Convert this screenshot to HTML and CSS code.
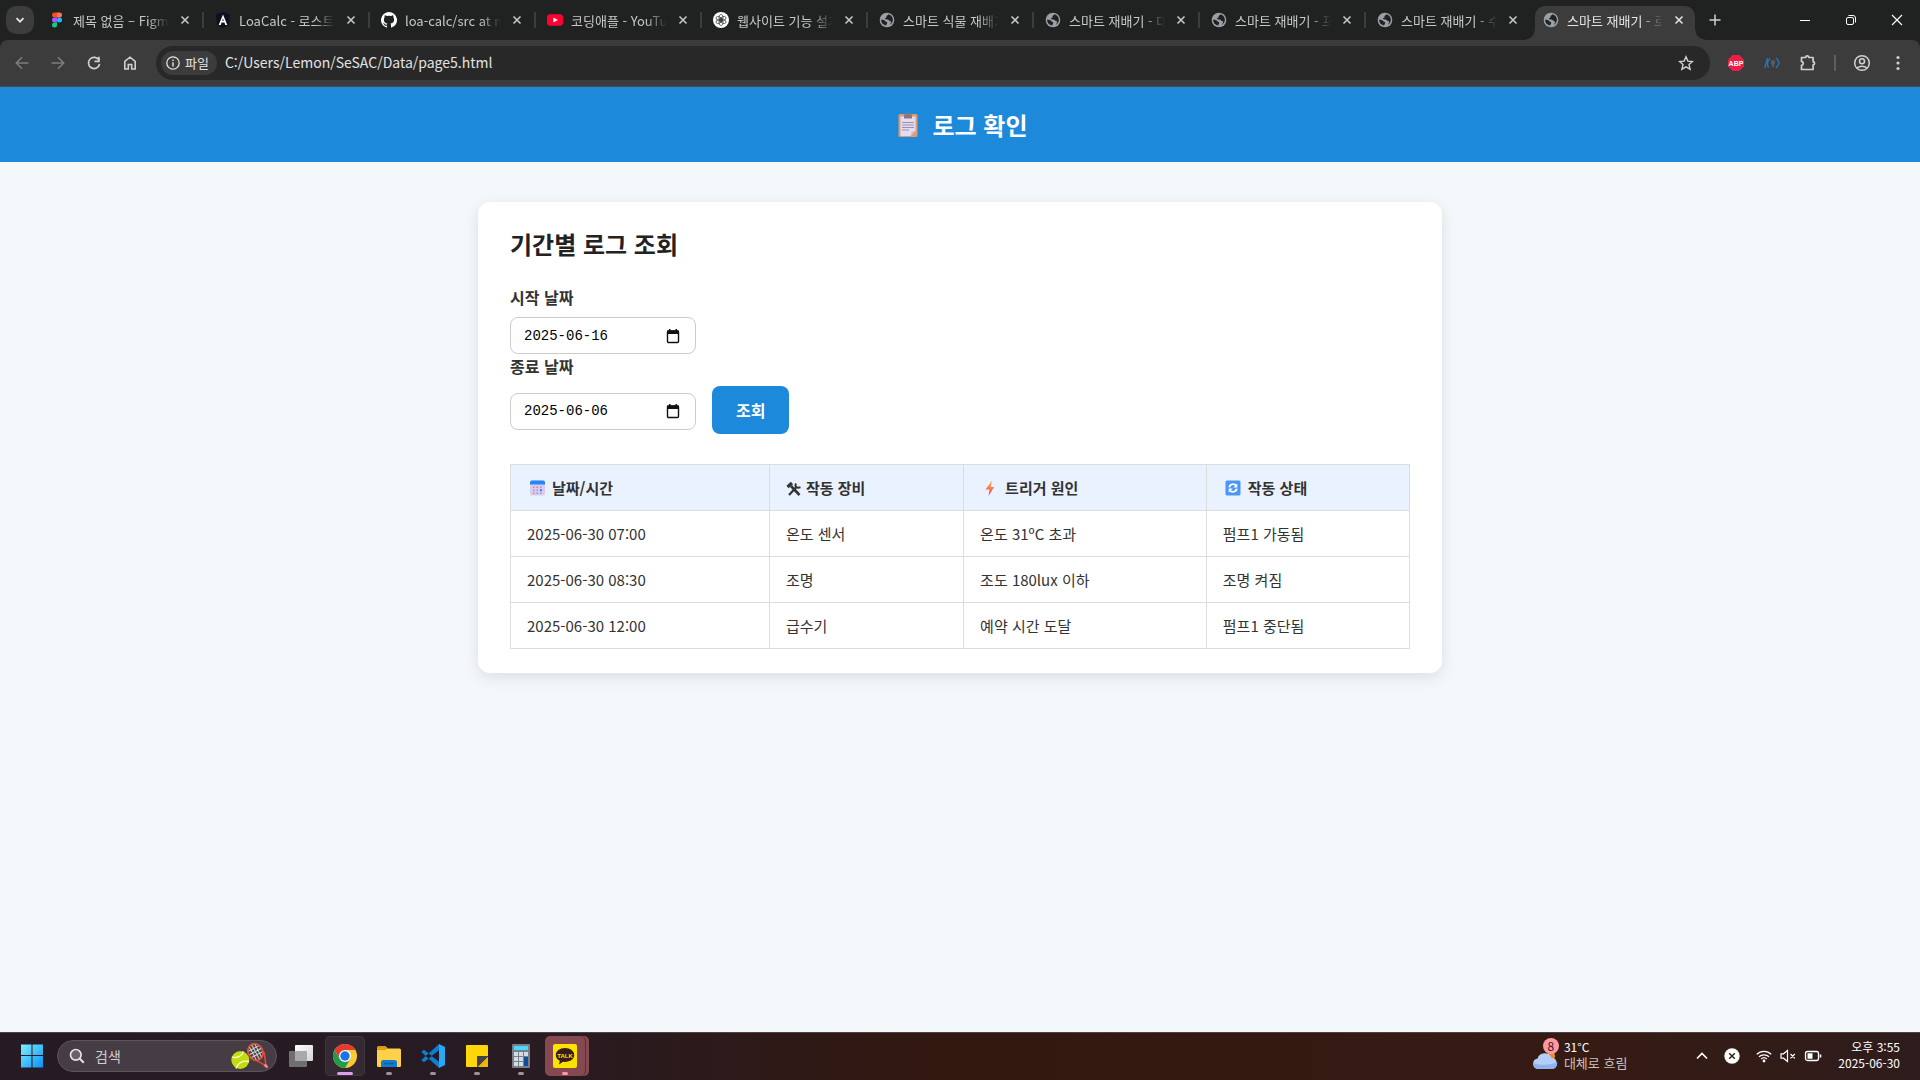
FILE: index.html
```html
<!DOCTYPE html>
<html lang="ko">
<head>
<meta charset="utf-8">
<meta name="viewport" content="width=device-width, initial-scale=1">
<title>스마트 재배기 - 로그 확인</title>
<link rel="stylesheet" href="styles.css">
</head>
<body>
<svg class="defs" aria-hidden="true">
  <symbol id="globe" viewBox="0 0 16 16">
    <circle cx="8" cy="8" r="7.3" fill="#9aa0a6"/>
    <path d="M2.2 7.6c1 .4 2.2.3 3 .6.9.4.9 1.3 1.900 1.500 1 .2 1.500.8 1 1.600-.5.700-.5 1.400-.9 2.300C4.300 13.200 2 11 2.200 7.600zM9.600 2.300c-.2 1-1.600.8-2 1.600-.4.700.3 1.300-.4 1.900-.5.500-1.200.3-1.300.9 0 .7 1.500.7 2.600.8 1.300.1 1.400 1.500 2.500 1.500 1 0 1.300.9 1 1.700-.3.800-1 1.400-1.300 2.200C13 11.500 14.200 9.500 13.800 7c-.4-2.400-2-4.100-4.200-4.700z" fill="#202221"/>
  </symbol>
  <symbol id="cross" viewBox="0 0 16 16"><path d="M4.500 4.500l7 7M11.500 4.500l-7 7" stroke="currentColor" stroke-width="1.600" fill="none"/></symbol>
</svg>

<header class="browser">
  <div class="tabstrip">
    <button class="tab-search" aria-label="탭 검색"><svg width="12" height="12" viewBox="0 0 12 12"><path d="M2.500 4.200L6 7.700l3.500-3.500" stroke="#e3e3e3" stroke-width="1.800" fill="none"/></svg></button>
    <div class="tabs">
      <div class="tab"><svg class="fav" viewBox="0 0 16 16"><path d="M8 .5H5.500a2.500 2.500 0 000 5H8z" fill="#f24e1e"/><path d="M8 .5h2.500a2.500 2.500 0 010 5H8z" fill="#ff7262"/><path d="M8 5.500H5.500a2.500 2.500 0 000 5H8z" fill="#a259ff"/><circle cx="10.500" cy="8" r="2.500" fill="#1abcfe"/><path d="M8 10.500H5.500A2.500 2.500 0 108 13z" fill="#0acf83"/></svg><span class="title">제목 없음 – Figma</span><button class="close" aria-label="닫기"><svg><use href="#cross"/></svg></button></div>
      <div class="tab"><svg class="fav" viewBox="0 0 16 16"><path d="M8 0l7 2.500-1 10L8 16l-6-3.500-1-10z" fill="#0c1020"/><path d="M3.700 13L8 2.500 12.300 13h-2L9.400 10.500H6.600L5.700 13zM7.200 8.800h1.600L8 6.600z" fill="#fff"/></svg><span class="title">LoaCalc - 로스트아</span><button class="close" aria-label="닫기"><svg><use href="#cross"/></svg></button></div>
      <div class="tab"><svg class="fav" viewBox="0 0 16 16"><path d="M8 0a8 8 0 00-2.500 15.600c.4.100.5-.2.500-.4v-1.500c-2.200.5-2.700-1-2.700-1-.4-.9-.9-1.200-.9-1.200-.7-.5.100-.5.100-.5.800.1 1.200.8 1.200.8.7 1.200 1.900.9 2.300.7.100-.5.300-.9.500-1.100-1.800-.2-3.600-.9-3.600-4 0-.9.300-1.600.8-2.100-.1-.2-.4-1 .1-2.100 0 0 .7-.2 2.200.8a7.600 7.600 0 014 0c1.500-1 2.200-.8 2.200-.8.400 1.100.2 1.900.1 2.100.5.600.8 1.300.8 2.100 0 3.100-1.900 3.700-3.600 3.900.3.300.5.800.5 1.500v2.400c0 .2.100.5.500.4A8 8 0 008 0z" fill="#fff"/></svg><span class="title">loa-calc/src at ma</span><button class="close" aria-label="닫기"><svg><use href="#cross"/></svg></button></div>
      <div class="tab"><svg class="fav" viewBox="0 0 16 16"><rect y="2.300" width="16" height="11.400" rx="3" fill="#ff0033"/><path d="M6.400 5.500v5L10.800 8z" fill="#fff"/></svg><span class="title">코딩애플 - YouTub</span><button class="close" aria-label="닫기"><svg><use href="#cross"/></svg></button></div>
      <div class="tab"><svg class="fav" viewBox="0 0 16 16"><circle cx="8" cy="8" r="8" fill="#fff"/><g fill="none" stroke="#333" stroke-width=".7"><ellipse cx="8" cy="5.700" rx="2" ry="3.300"/><ellipse cx="8" cy="5.700" rx="2" ry="3.300" transform="rotate(60 8 8)"/><ellipse cx="8" cy="5.700" rx="2" ry="3.300" transform="rotate(120 8 8)"/><ellipse cx="8" cy="5.700" rx="2" ry="3.300" transform="rotate(180 8 8)"/><ellipse cx="8" cy="5.700" rx="2" ry="3.300" transform="rotate(240 8 8)"/><ellipse cx="8" cy="5.700" rx="2" ry="3.300" transform="rotate(300 8 8)"/></g></svg><span class="title">웹사이트 기능 설계</span><button class="close" aria-label="닫기"><svg><use href="#cross"/></svg></button></div>
      <div class="tab"><svg class="fav"><use href="#globe"/></svg><span class="title">스마트 식물 재배기</span><button class="close" aria-label="닫기"><svg><use href="#cross"/></svg></button></div>
      <div class="tab"><svg class="fav"><use href="#globe"/></svg><span class="title">스마트 재배기 - 대</span><button class="close" aria-label="닫기"><svg><use href="#cross"/></svg></button></div>
      <div class="tab"><svg class="fav"><use href="#globe"/></svg><span class="title">스마트 재배기 - 프</span><button class="close" aria-label="닫기"><svg><use href="#cross"/></svg></button></div>
      <div class="tab last"><svg class="fav"><use href="#globe"/></svg><span class="title">스마트 재배기 - 수</span><button class="close" aria-label="닫기"><svg><use href="#cross"/></svg></button></div>
      <div class="tab active"><svg class="fav"><use href="#globe"/></svg><span class="title">스마트 재배기 - 로</span><button class="close" aria-label="닫기"><svg><use href="#cross"/></svg></button></div>
    </div>
    <button class="new-tab" aria-label="새 탭"><svg width="16" height="16" viewBox="0 0 16 16"><path d="M8 2.500v11M2.500 8h11" stroke="#d0d0d0" stroke-width="1.500"/></svg></button>
    <div class="window-buttons">
      <button aria-label="최소화"><svg width="12" height="12" viewBox="0 0 12 12"><path d="M1 6.500h10" stroke="#fff"/></svg></button>
      <button aria-label="이전 크기로"><svg width="12" height="12" viewBox="0 0 12 12"><g fill="none" stroke="#fff"><rect x="1.500" y="3.500" width="7" height="7" rx="1.500"/><path d="M3.500 1.500H8a2.500 2.500 0 012.500 2.500v4.500"/></g></svg></button>
      <button aria-label="창 닫기"><svg width="12" height="12" viewBox="0 0 12 12"><path d="M1 1l10 10M11 1L1 11" stroke="#fff" stroke-width="1.100"/></svg></button>
    </div>
  </div>

  <div class="toolbar">
    <nav class="nav-buttons">
      <button aria-label="뒤로"><svg width="16" height="16" viewBox="0 0 16 16"><path d="M14.500 8H2.500M8 2.300L2.300 8 8 13.700" stroke="#7c7c7c" stroke-width="1.600" fill="none"/></svg></button>
      <button aria-label="앞으로"><svg width="16" height="16" viewBox="0 0 16 16"><path d="M1.500 8h12M8 2.300L13.700 8 8 13.700" stroke="#7c7c7c" stroke-width="1.600" fill="none"/></svg></button>
      <button aria-label="새로고침"><svg width="16" height="16" viewBox="0 0 16 16"><path d="M13 5.200A5.600 5.600 0 1013.600 9" stroke="#d0d0d0" stroke-width="1.700" fill="none"/><path d="M13.800 1.800v5.400H8.400V5.600h3.700V1.800z" fill="#d0d0d0"/></svg></button>
      <button aria-label="홈"><svg width="16" height="16" viewBox="0 0 16 16"><path d="M2.800 14V6.300L8 2.200l5.200 4.100V14H9.700V9.500H6.300V14z" stroke="#d0d0d0" stroke-width="1.600" fill="none"/></svg></button>
    </nav>
    <div class="omnibox">
      <button class="chip"><svg width="14" height="14" viewBox="0 0 14 14"><circle cx="7" cy="7" r="6.200" fill="none" stroke="#e3e3e3" stroke-width="1.300"/><path d="M7 6.200V10.500M7 3.500V5" stroke="#e3e3e3" stroke-width="1.400"/></svg><span>파일</span></button>
      <input class="url" type="text" aria-label="주소창" value="C:/Users/Lemon/SeSAC/Data/page5.html">
      <button class="star" aria-label="북마크"><svg width="16" height="16" viewBox="0 0 16 16"><path d="M8 1.800l1.900 4.300 4.600.4L11 9.600l1.100 4.600L8 11.800l-4.100 2.400L5 9.600 1.500 6.500l4.600-.4z" fill="none" stroke="#d0d0d0" stroke-width="1.400"/></svg></button>
    </div>
    <div class="extensions">
      <button aria-label="Adblock Plus"><svg width="16" height="16" viewBox="0 0 16 16"><path d="M4.700 0h6.600L16 4.700v6.600L11.300 16H4.700L0 11.300V4.700z" fill="#ed1e45"/><text x="8" y="10.500" text-anchor="middle" class="abp">ABP</text></svg></button>
      <button aria-label="확장 프로그램"><svg width="16" height="16" viewBox="0 0 16 16"><g fill="none" stroke="#2873b8" stroke-width="1.400"><path d="M.7 13L3.500 3M6.200 3.200C4.500 5 3.600 6.500 3.500 8c0 2 .2 3.500 1 5M12.300 3c1 1.500 2.600 3.400 2.900 5-.7 1.700-2 3.500-3.200 5"/></g><path d="M9 5a2.400 2.400 0 00-1 4.500V12h2V9.500A2.400 2.400 0 009 5z" fill="#5c5c5c"/></svg></button>
      <button aria-label="확장"><svg width="18" height="18" viewBox="0 0 18 18"><path d="M2.500 3.500h4.200a1.600 1.600 0 013.200 0h4.200v4.300a1.500 1.500 0 010 3v4.700H2.500v-4.200c2.400-.3 2.400-3.300 0-3.600z" fill="none" stroke="#d0d0d0" stroke-width="1.700" stroke-linejoin="round"/></svg></button>
      <span class="divider"></span>
      <button aria-label="프로필"><svg width="18" height="18" viewBox="0 0 18 18"><g fill="none" stroke="#d0d0d0" stroke-width="1.500"><circle cx="9" cy="9" r="7.300"/><circle cx="9" cy="7.200" r="2.500"/><path d="M4 14c2.700-2.300 7.300-2.300 10 0"/></g></svg></button>
      <button aria-label="메뉴"><svg width="16" height="16" viewBox="0 0 16 16"><g fill="#d0d0d0"><circle cx="8" cy="2.500" r="1.600"/><circle cx="8" cy="8" r="1.600"/><circle cx="8" cy="13.500" r="1.600"/></g></svg></button>
    </div>
  </div>
</header>

<div class="page">
  <div class="banner">
    <svg width="28" height="28" viewBox="0 0 28 28" aria-hidden="true"><rect x="4.500" y="3" width="19" height="23" rx="1.500" fill="#e29b6c"/><path d="M6.500 5.500h15v14.500l-5 5h-10z" fill="#e6dcf2"/><path d="M16.500 25l1.500-4.500 3.500-.5z" fill="#c9b8dd"/><path d="M10 3.500h2a2 2 0 014 0h2v4h-8z" fill="#857985"/><path d="M8 11.500h12M8 14h12M8 16.500h12M8 19h7" stroke="#9b8fae" stroke-width="1.100"/></svg>
    <h1>로그 확인</h1>
  </div>
  <main class="card">
    <h2>기간별 로그 조회</h2>
    <form class="filter" onsubmit="return false">
      <label for="start">시작 날짜</label>
      <div class="date-field">
        <input id="start" type="text" value="2025-06-16">
        <button type="button" aria-label="달력 열기"><svg width="14" height="16" viewBox="0 0 14 16"><rect x="1.500" y="3" width="11" height="11.500" rx="1" fill="none" stroke="#111" stroke-width="1.400"/><path d="M1 2.500h12v3.500H1zM3 1h1.500v2H3zM9.500 1H11v2H9.500z" fill="#111"/></svg></button>
      </div>
      <label for="end">종료 날짜</label>
      <div class="submit-row">
        <div class="date-field">
          <input id="end" type="text" value="2025-06-06">
          <button type="button" aria-label="달력 열기"><svg width="14" height="16" viewBox="0 0 14 16"><rect x="1.500" y="3" width="11" height="11.500" rx="1" fill="none" stroke="#111" stroke-width="1.400"/><path d="M1 2.500h12v3.500H1zM3 1h1.500v2H3zM9.500 1H11v2H9.500z" fill="#111"/></svg></button>
        </div>
        <button class="search-button">조회</button>
      </div>
    </form>
    <table>
      <colgroup><col class="col-time"><col class="col-device"><col class="col-cause"><col class="col-state"></colgroup>
      <thead>
        <tr>
          <th><span class="head"><svg width="20" height="20" viewBox="0 0 20 20"><rect x="3" y="2.500" width="15" height="15" rx="2" fill="#dccbee"/><path d="M3 6.500V4.500a2 2 0 012-2h11a2 2 0 012 2v2z" fill="#2387f0"/><g fill="#a294c0"><path d="M6 8.500h1.500V10H6zM9.500 8.500H11V10H9.500zM6 11.500h1.500V13H6zM9.500 11.500H11V13H9.500zM6 14.500h1.500V16H6zM9.500 14.500H11V16H9.500zM13 14.500h1.500V16H13zM13 8.500h1.500V10H13z"/></g><path d="M13 11.300h2v2h-2z" fill="#2387f0"/></svg>날짜/시간</span></th>
          <th><span class="head tight"><svg width="16" height="20" viewBox="0 0 16 20"><g stroke="#333" fill="none"><path d="M5 8l8.500 9" stroke-width="2.600"/><path d="M10.500 9L3 17" stroke-width="2.200"/><path d="M1.500 9L6 5" stroke-width="3.200"/><path d="M10 5.500c-1.500 3 .5 5 4.500 3.800" stroke-width="2"/></g></svg>작동 장비</span></th>
          <th><span class="head"><svg width="20" height="20" viewBox="0 0 20 20"><defs><linearGradient id="bolt" x1="0" y1="0" x2="0" y2="1"><stop offset="0" stop-color="#ffb13d"/><stop offset="1" stop-color="#f0455e"/></linearGradient></defs><path d="M12 2.500L5.500 11.500h4L8.500 18l5.700-9h-3.500z" fill="url(#bolt)"/></svg>트리거 원인</span></th>
          <th><span class="head"><svg width="20" height="20" viewBox="0 0 20 20"><rect x="2.500" y="2.500" width="15" height="15" rx="1.500" fill="#4a96f5"/><g fill="none" stroke="#fff" stroke-width="1.800"><path d="M6.300 9.300c.4-3.300 4.600-4.200 6.900-1.600M13.700 10.700c-.4 3.300-4.600 4.200-6.900 1.600"/></g><path d="M14.300 5.500v4h-4zM5.700 14.500v-4h4z" fill="#fff"/></svg>작동 상태</span></th>
        </tr>
      </thead>
      <tbody>
        <tr><td>2025-06-30 07:00</td><td>온도 센서</td><td>온도 31ºC 초과</td><td>펌프1 가동됨</td></tr>
        <tr><td>2025-06-30 08:30</td><td>조명</td><td>조도 180lux 이하</td><td>조명 켜짐</td></tr>
        <tr><td>2025-06-30 12:00</td><td>급수기</td><td>예약 시간 도달</td><td>펌프1 중단됨</td></tr>
      </tbody>
    </table>
  </main>
</div>

<footer class="taskbar">
  <button class="start" aria-label="시작"><svg width="24" height="24" viewBox="0 0 24 24"><defs><linearGradient id="win" x1="0" y1="0" x2="1" y2="1"><stop offset="0" stop-color="#7cf0ff"/><stop offset="1" stop-color="#0a90f5"/></linearGradient></defs><path d="M1 .5h10.500V11H1zM12.500.5H23V11H12.500zM1 12h10.500v11.500H1zM12.500 12H23v11.500H12.500z" fill="url(#win)"/></svg></button>
  <label class="search">
    <svg width="16" height="16" viewBox="0 0 16 16"><circle cx="6.800" cy="6.800" r="5.300" fill="#6a6068" stroke="#e6e2e4" stroke-width="1.700"/><path d="M10.800 10.800l4 4" stroke="#e6e2e4" stroke-width="2"/></svg>
    <input type="text" placeholder="검색" aria-label="검색">
    <svg width="38" height="26" viewBox="0 0 38 26"><circle cx="9.300" cy="17" r="9" fill="#c3dc10"/><path d="M1 14c5 1.500 10-.5 11.500-5.500M5 25.500c2-6 7.500-8.500 13-7" fill="none" stroke="#f4fbc0" stroke-width="1.300"/><path d="M20 15c4 2 9 4 15 8-1-6-1-10-2-14" fill="none" stroke="#e0453e" stroke-width="1.600"/><g transform="rotate(-28 24.500 9)"><ellipse cx="24.500" cy="9" rx="7.300" ry="8.500" fill="#4b4548" stroke="#d9503f" stroke-width="1.800"/><path d="M19 5h11M18 8.500h13M18.500 12h12M21.500 2v14M24.500 1v16M27.500 2v14" stroke="#ddd" stroke-width=".9"/></g><path d="M33.500 21.500l3 3" stroke="#e88" stroke-width="2.500"/></svg>
  </label>
  <div class="apps">
    <button aria-label="작업 보기"><svg width="24" height="24" viewBox="0 0 24 24"><defs><linearGradient id="tv" x1="0" y1="0" x2="1" y2="1"><stop offset="0" stop-color="#fff"/><stop offset="1" stop-color="#d5d5d5"/></linearGradient></defs><rect x="6" y="1" width="18" height="16" rx="1" fill="url(#tv)"/><rect y="7" width="18" height="16" rx="1" fill="#6f6e70"/><path d="M6 7h12v10H6z" fill="#a9a9ab"/></svg></button>
    <button class="current" aria-label="Chrome"><svg width="24" height="24" viewBox="0 0 24 24"><circle cx="12" cy="12" r="12" fill="#fcc934"/><path d="M12 6h10.400A12 12 0 001.600 6L6.800 15z" fill="#e33b2e"/><path d="M1.600 6A12 12 0 0012 24l5.200-9H6.800z" fill="#269a4c"/><circle cx="12" cy="12" r="6" fill="#fff"/><circle cx="12" cy="12" r="4.700" fill="#1a73e8"/></svg></button>
    <button class="open" aria-label="파일 탐색기"><svg width="24" height="24" viewBox="0 0 24 24"><path d="M0 3.500Q0 2 1.500 2h7l2.500 2.500H9V9H0z" fill="#d99a12"/><rect y="4.500" width="24" height="18.500" rx="1.500" fill="#ffd04a"/><path d="M0 6V4.500h7l3-1.500V4L8 6z" fill="#d99a12"/><path d="M4 23v-4.500Q4 16 6.500 16h11q2.500 0 2.500 2.500V23z" fill="#1479cf"/><path d="M7 19.500h10" stroke="#0b5ba7" stroke-width="1.300"/></svg></button>
    <button class="open" aria-label="Visual Studio Code"><svg width="24" height="24" viewBox="0 0 24 24"><path d="M18 0L24 3v18l-6 3z" fill="#29a7f2"/><path d="M18 6.500L3 18.200.3 16 18 0M18 17.500L3 5.800.3 8 18 24" fill="#0a7fcf"/><path d="M10.800 12L18 6.500v11z" fill="#241a23"/></svg></button>
    <button class="open" aria-label="스티커 메모"><svg width="24" height="24" viewBox="0 0 24 24"><rect x="1" y="1" width="22" height="22" rx="1" fill="#fed60a"/><path d="M12 12h11v1L13 23h-1z" fill="#434343"/><path d="M13 23L23 13v9a1 1 0 01-1 1z" fill="#f0b800"/></svg></button>
    <button class="open" aria-label="계산기"><svg width="24" height="24" viewBox="0 0 24 24"><rect x="3" width="18" height="24" rx="1" fill="#75808a"/><rect x="5" y="2" width="14" height="4" fill="#4fd6f7"/><path d="M5 8h4v4H5zM10 8h4v4h-4zM15 8h4v4h-4zM5 13h4v4H5zM10 13h4v4h-4zM5 18h4v4H5zM10 18h4v4h-4z" fill="#d5dde4"/><path d="M15 13h4v9h-4z" fill="#0e4f9c"/></svg></button>
    <button class="open alert" aria-label="카카오톡"><svg width="24" height="24" viewBox="0 0 24 24"><rect width="24" height="24" rx="2" fill="#fbe300"/><path d="M12 4c-5.200 0-9.200 3-9.200 7 0 2.500 1.600 4.600 4 5.800l-.8 3.600 4-2.600 2 .1c5.200 0 9.200-3 9.200-6.900S17.200 4 12 4z" fill="#391b1b"/><text x="12" y="13.500" text-anchor="middle" class="talk">TALK</text></svg></button>
  </div>
  <button class="weather">
    <span class="cloud"><svg width="26" height="20" viewBox="0 0 26 20"><circle cx="19" cy="6" r="4" fill="#f08a1c"/><path d="M6 19a5.300 5.300 0 01-.5-10.500A7.500 7.500 0 0119.500 7.700 5.700 5.700 0 0120 19z" fill="#b4cdf5"/><path d="M6 19a5.300 5.300 0 01-4.800-6c4 2 14 3 24-.5A5.700 5.700 0 0120 19z" fill="#8fb2ec"/></svg><span class="badge">8</span></span>
    <span class="weather-text"><span>31°C</span><span class="dim">대체로 흐림</span></span>
  </button>
  <div class="tray">
    <button aria-label="숨겨진 아이콘"><svg width="12" height="16" viewBox="0 0 12 16"><path d="M1 10.500l5-5 5 5" stroke="#fff" stroke-width="1.600" fill="none"/></svg></button>
    <button aria-label="알림"><svg width="16" height="16" viewBox="0 0 16 16"><circle cx="8" cy="8" r="7.700" fill="#fff"/><path d="M5.200 5.200l5.600 5.600M10.800 5.200l-5.600 5.600" stroke="#35201a" stroke-width="1.500"/></svg></button>
    <button class="status" aria-label="네트워크, 소리, 배터리">
      <svg width="16" height="16" viewBox="0 0 16 16"><g fill="none" stroke="#fff" stroke-width="1.300"><path d="M.8 6.400a10.300 10.300 0 0114.400 0M3 8.800a7.200 7.200 0 0110 0M5.200 11a4.100 4.100 0 015.600 0"/></g><circle cx="8" cy="13" r="1.400" fill="#fff"/></svg>
      <svg width="16" height="16" viewBox="0 0 16 16"><path d="M1 5.800h2.500L7.500 2.500v11L3.500 10.200H1zM10.500 6l4.300 4.300M14.800 6l-4.300 4.300" fill="none" stroke="#fff" stroke-width="1.200"/></svg>
      <svg width="18" height="16" viewBox="0 0 18 16"><rect x="1.500" y="3.500" width="13" height="9" rx="2" fill="none" stroke="#fff" stroke-width="1.300"/><path d="M3.500 5.300h5v5.400h-5z" fill="#fff"/><path d="M16.500 6.500v3" stroke="#fff" stroke-width="1.600"/></svg>
    </button>
    <button class="clock"><span>오후 3:55</span><span>2025-06-30</span></button>
  </div>
</footer>
</body>
</html>
```
FILE: styles.css
```css
* {
  box-sizing: border-box;
}

body {
  margin: 0;
  min-height: 100vh;
  display: flex;
  flex-direction: column;
  background: #f4f8fb;
  color: #222;
  font-family: "Noto Sans CJK KR", "Noto Sans", sans-serif;
}

button,
input {
  font: inherit;
  color: inherit;
  border: 0;
  padding: 0;
  background: none;
}

button {
  display: flex;
  align-items: center;
  justify-content: center;
}

svg {
  display: block;
  flex: none;
}

.defs {
  display: none;
}

/* Browser window */

.browser {
  background: #202221;
  color: #e3e3e3;
  font-size: 13px;
}

.tabstrip {
  display: flex;
  align-items: center;
  height: 40px;
  padding-left: 6px;
}

.tab-search {
  width: 28px;
  height: 28px;
  margin-right: 4px;
  border-radius: 10px;
  background: #3c3c3c;
}

.tabs {
  display: flex;
  min-width: 0;
}

.tab {
  position: relative;
  display: flex;
  align-items: center;
  flex: 0 1 166px;
  min-width: 0;
  height: 40px;
  padding: 0 11px;
  gap: 8px;
  color: #c7c7c7;
}

.tab::after {
  content: "";
  position: absolute;
  right: 0;
  top: 12px;
  width: 2px;
  height: 16px;
  background: #3c3c3c;
}

.tab.last::after {
  display: none;
}

.fav {
  width: 16px;
  height: 16px;
}

.title {
  flex: 1;
  overflow: hidden;
  white-space: nowrap;
  mask-image: linear-gradient(90deg, #000 78%, transparent);
}

.close svg {
  width: 16px;
  height: 16px;
}

.tab.active {
  z-index: 0;
  color: #e3e3e3;
}

.tab.active::before {
  content: "";
  position: absolute;
  z-index: -1;
  inset: 6px 3px 0;
  border-radius: 10px 10px 0 0;
  background: #3c3c3c;
}

.tab.active::after {
  z-index: -1;
  inset: auto -7px 0;
  width: auto;
  height: 10px;
  background:
    radial-gradient(circle at 0 0, transparent 9px, #3c3c3c 10px) left / 10px 10px no-repeat,
    radial-gradient(circle at 100% 0, transparent 9px, #3c3c3c 10px) right / 10px 10px no-repeat;
}

.new-tab {
  width: 28px;
  height: 28px;
  margin-left: 3px;
}

.window-buttons {
  display: flex;
  margin-left: auto;
}

.window-buttons button {
  width: 46px;
  height: 40px;
}

.toolbar {
  display: flex;
  align-items: center;
  height: 47px;
  border-radius: 8px 8px 0 0;
  border-bottom: 1px solid #4a4a4a;
  background: #3c3c3c;
}

.nav-buttons {
  display: flex;
  padding: 0 8px 0 4px;
}

.nav-buttons button {
  width: 36px;
  height: 36px;
}

.omnibox {
  display: flex;
  flex: 1;
  align-items: center;
  height: 34px;
  padding: 0 16px 0 5px;
  border-radius: 17px;
  background: #282828;
}

.chip {
  gap: 5px;
  height: 24px;
  padding: 0 8px 0 5px;
  border-radius: 12px;
  background: #3c3c3c;
}

.chip span {
  padding-bottom: 2px;
}

.url {
  flex: 1;
  min-width: 0;
  padding: 0 0 2px 8px;
  font-size: 14px;
}

.extensions {
  display: flex;
  align-items: center;
  padding: 0 4px 0 8px;
}

.extensions button {
  width: 36px;
  height: 36px;
}

.divider {
  width: 2px;
  height: 16px;
  margin: 0 8px;
  background: #5f5f5f;
}

.abp {
  font: bold 7px "Liberation Sans", sans-serif;
  fill: #fff;
}

/* Log page */

.page {
  flex: 1;
}

.banner {
  display: flex;
  align-items: center;
  justify-content: center;
  gap: 10px;
  padding: 20px 14px 19px 16px;
  background: #1c89db;
  color: #fff;
}

h1,
h2 {
  margin: 0;
  font-size: 24px;
  line-height: 36px;
}

.card {
  max-width: 964px;
  margin: 40px auto;
  padding: 24px 32px;
  border-radius: 12px;
  background: #fff;
  box-shadow: 0 4px 16px rgba(0, 0, 0, 0.1);
}

.filter {
  margin: 23px 0 30px;
}

.filter label {
  display: block;
  margin-bottom: 8px;
  font-size: 16px;
  line-height: 24px;
  font-weight: bold;
  color: #333;
}

.date-field {
  display: flex;
  align-items: center;
  width: 186px;
  height: 37px;
  padding: 0 15px 0 13px;
  border: 1px solid #ccc;
  border-radius: 8px;
  background: #fff;
}

.date-field input {
  flex: 1;
  min-width: 0;
  font-family: "Liberation Mono", monospace;
  font-size: 14px;
  color: #000;
}

.submit-row {
  display: flex;
  align-items: center;
  gap: 16px;
}

.submit-row .date-field {
  margin-top: 2px;
}

.search-button {
  height: 48px;
  padding: 0 24px;
  border-radius: 8px;
  background: #1c89db;
  color: #fff;
  font-size: 16px;
  font-weight: bold;
}

table {
  width: 100%;
  border-collapse: collapse;
  table-layout: fixed;
  font-size: 15px;
  line-height: 21px;
  color: #333;
}

.col-time {
  width: 28.8%;
}

.col-device {
  width: 21.6%;
}

.col-cause {
  width: 27%;
}

th,
td {
  padding: 12px 16px;
  border: 1px solid #ddd;
  text-align: left;
}

th {
  background: #eaf2ff;
}

.head {
  display: flex;
  align-items: center;
  gap: 5px;
}

.tight {
  gap: 4px;
}

/* Desktop taskbar */

.taskbar {
  display: flex;
  align-items: center;
  height: 48px;
  padding: 0 20px 1px;
  border-top: 1px solid #4c4349;
  background: linear-gradient(90deg, #261b25 0%, #281b22 28%, #33180f 50%, #351b14 85%, #2e1c1c 100%);
  color: #fff;
  font-size: 12px;
}

.search {
  display: flex;
  align-items: center;
  width: 220px;
  height: 32px;
  margin: 0 4px 0 13px;
  padding: 0 7px 0 11px;
  border: 1px solid #5d5359;
  border-radius: 16px;
  background: #463c44;
}

.search input {
  flex: 1;
  min-width: 0;
  padding-left: 10px;
  font-size: 14px;
}

.search input::placeholder {
  color: #d2cdd0;
}

.apps {
  display: flex;
  gap: 4px;
}

.apps button {
  position: relative;
  width: 40px;
  height: 40px;
  border-radius: 5px;
}

.apps .current {
  background: #352a34;
  box-shadow: inset 0 0 0 1px #40353f;
}

.apps .alert {
  background: #86494f;
  box-shadow: 1px 0 #5e3033, 4px 0 #86494f;
}

.current::after,
.open::after {
  content: "";
  position: absolute;
  bottom: 1px;
  left: 50%;
  width: 6px;
  height: 3px;
  margin-left: -3px;
  border-radius: 2px;
  background: #9c9499;
}

.current::after {
  width: 16px;
  margin-left: -8px;
  background: #dd9fe8;
}

.alert::after {
  background: #ff98a4;
}

.talk {
  font: bold 6px "Liberation Sans", sans-serif;
  fill: #fbe300;
}

.weather {
  gap: 6px;
  margin-left: auto;
}

.cloud {
  position: relative;
  padding-top: 8px;
}

.badge {
  position: absolute;
  top: -4px;
  left: 11px;
  width: 16px;
  height: 16px;
  border-radius: 8px;
  background: #ff98a4;
  color: #33180f;
  line-height: 16px;
}

.weather-text,
.clock {
  display: flex;
  flex-direction: column;
  line-height: 16px;
}

.weather-text {
  align-items: flex-start;
  padding-bottom: 2px;
}

.dim {
  color: #cbc2bf;
  font-size: 13px;
}

.tray {
  display: flex;
  align-items: center;
  margin-left: 61px;
}

.tray button {
  height: 40px;
  padding: 0 8px;
}

.tray .status {
  gap: 8px;
}

.tray .clock {
  align-items: flex-end;
  padding: 0 0 2px 8px;
}
```
